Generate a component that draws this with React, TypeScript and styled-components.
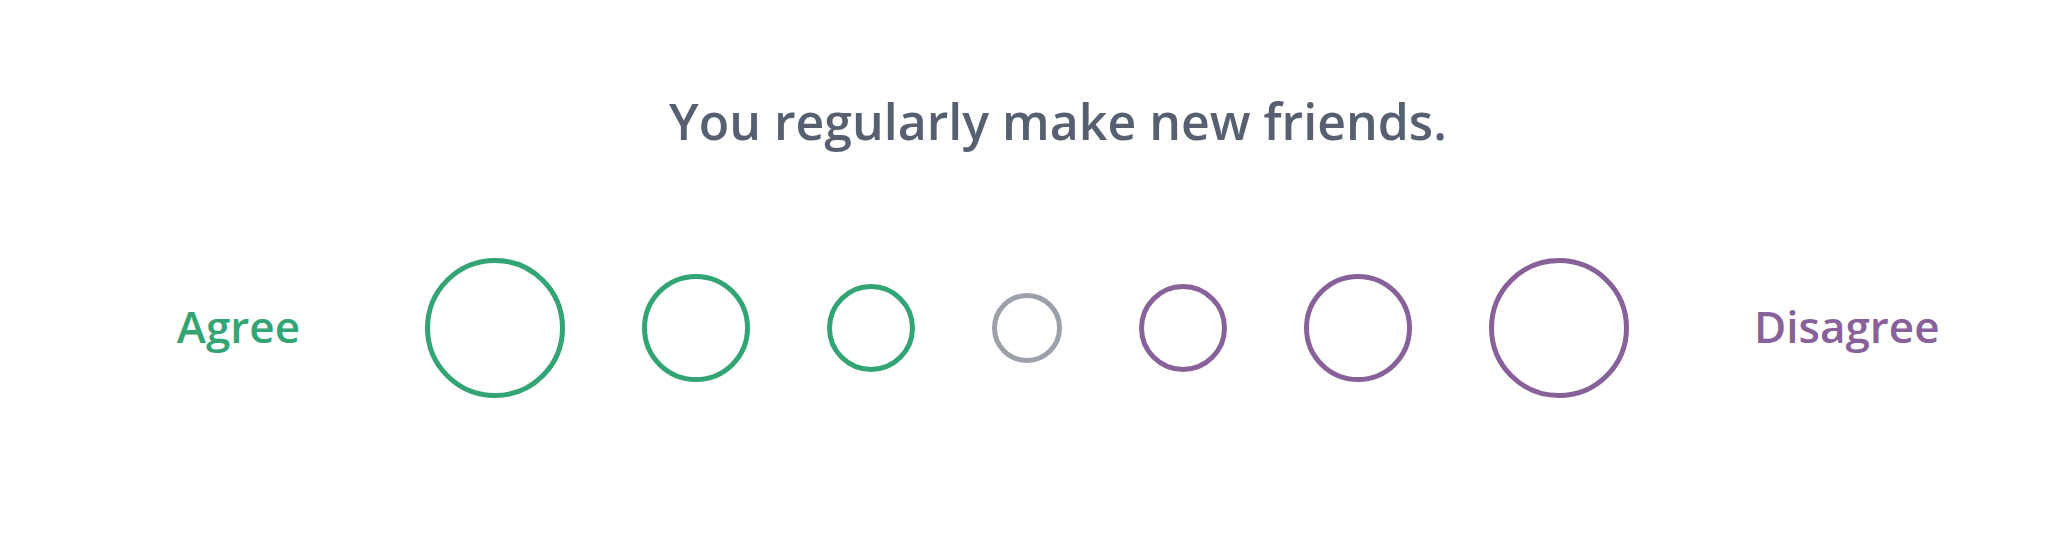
import styled, { createGlobalStyle } from "styled-components"

const GlobalStyle = createGlobalStyle`
  html, body {
    margin: 0;
    padding: 0;
    background: #ffffff;
  }
  body {
    font-family: "Open Sans", "Noto Sans", sans-serif;
  }
`

type Side = "agree" | "neutral" | "disagree"

const colors: Record<Side, string> = {
  agree: "#33a474",
  neutral: "#9ca0a9",
  disagree: "#88619a"
}

const options: { size: number; side: Side }[] = [
  { size: 140, side: "agree" },
  { size: 108, side: "agree" },
  { size: 88, side: "agree" },
  { size: 70, side: "neutral" },
  { size: 88, side: "disagree" },
  { size: 108, side: "disagree" },
  { size: 140, side: "disagree" }
]

// ring drawn as svg so the edge stays smooth
function Ring({ size, color }: { size: number; color: string }) {
  const r = size / 2 - 2.5
  return (
    <svg width={size} height={size} viewBox={`0 0 ${size} ${size}`}>
      <circle cx={size / 2} cy={size / 2} r={r} fill="none" stroke={color} strokeWidth={5} />
    </svg>
  )
}

function App() {
  return (
    <>
      <GlobalStyle />
      <Question>
        <Title>You regularly make new friends.</Title>
        <Scale>
          <Label $side="agree">Agree</Label>
          <Options>
            {options.map((opt, i) => (
              <Option
                key={i}
                type="button"
                $size={opt.size}
                aria-label={`option ${i + 1}`}
              >
                <Ring size={opt.size} color={colors[opt.side]} />
              </Option>
            ))}
          </Options>
          <Label $side="disagree">Disagree</Label>
        </Scale>
      </Question>
    </>
  )
}

const Question = styled.section`
  width: 2054px;
  height: 542px;
  padding-top: 87px;
  box-sizing: border-box;
`

const Title = styled.h1`
  margin: 0;
  padding-left: 62px;
  text-align: center;
  font-size: 50px;
  line-height: 68px;
  font-weight: 600;
  color: #576071;
`

const Scale = styled.div`
  display: grid;
  grid-template-columns: 1fr auto 1fr;
  align-items: center;
  column-gap: 125px;
  margin-top: 103px;
`

const Label = styled.div<{ $side: Side }>`
  font-size: 44px;
  font-weight: 600;
  line-height: 60px;
  padding-bottom: 4px;
  color: ${(p) => colors[p.$side]};
  justify-self: ${(p) => (p.$side === "agree" ? "end" : "start")};
`

const Options = styled.div`
  display: flex;
  align-items: center;
  gap: 77px;
`

const Option = styled.button<{ $size: number }>`
  display: block;
  width: ${(p) => p.$size}px;
  height: ${(p) => p.$size}px;
  padding: 0;
  border: none;
  border-radius: 50%;
  background: transparent;
  cursor: pointer;

  svg {
    display: block;
  }
`

export default App
